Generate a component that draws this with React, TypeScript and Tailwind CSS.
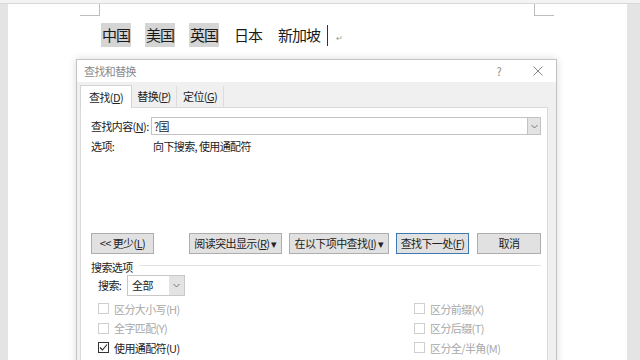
const WORDS = [
  { text: '中国', hl: true },
  { text: '美国', hl: true },
  { text: '英国', hl: true },
  { text: '日本', hl: false },
  { text: '新加坡', hl: false },
];

const LEFT_OPTS = [
  { label: '区分大小写(H)', checked: false },
  { label: '全字匹配(Y)', checked: false },
  { label: '使用通配符(U)', checked: true },
  { label: '', checked: false },
];

const RIGHT_OPTS = ['区分前缀(X)', '区分后缀(T)', '区分全/半角(M)', ''];

function Chevron() {
  return (
    <svg width="7" height="5" viewBox="0 0 7 5" className="text-[#777]">
      <path d="M0.5 1 L3.5 4 L6.5 1" fill="none" stroke="currentColor" strokeWidth="1" />
    </svg>
  );
}

function Check({ label, checked }: { label: string; checked: boolean }) {
  return (
    <div className="h-[19.5px] flex items-center gap-[5px]">
      <div
        className={`w-[11px] h-[11px] border bg-white flex items-center justify-center ${
          checked ? 'border-[#333]' : 'border-[#cfcfcf]'
        }`}
      >
        {checked && (
          <svg width="9" height="9" viewBox="0 0 9 9">
            <path d="M1 4.5 L3.5 7 L8 1.5" fill="none" stroke="#222" strokeWidth="1.1" />
          </svg>
        )}
      </div>
      {label && <span className={checked ? 'text-[#222]' : 'text-[#a8a8a8]'}>{label}</span>}
    </div>
  );
}

function Btn({ w, children, primary }: { w: string; children: React.ReactNode; primary?: boolean }) {
  return (
    <div
      className={`${w} h-[21px] flex items-center justify-center bg-[#e1e1e1] border ${
        primary ? 'border-[#3f79b4]' : 'border-[#adadad]'
      }`}
    >
      {children}
    </div>
  );
}

export default function App() {
  return (
    <div className="w-[640px] h-[360px] overflow-hidden bg-[#e4e4e4] relative font-['Noto_Sans_CJK_SC','Noto_Sans',sans-serif]">
      {/* ruler strip */}
      <div className="h-[4px] bg-[#f3f3f3] border-b border-[#d8d8d8]" />
      {/* document page */}
      <div className="ml-[8px] w-[619px] h-[356px] bg-white relative">
        <div className="absolute left-[72px] top-0 w-[20px] h-[12px] border-r border-b border-[#bdbdbd]" />
        <div className="absolute left-[526px] top-0 w-[20px] h-[12px] border-l border-b border-[#bdbdbd]" />
        <div className="pt-[16px] pl-[93px] flex items-center text-[15px] leading-[24px] text-[#1a1a1a] tracking-[-1px]">
          {WORDS.map((w, i) => (
            <span key={i} className={`${w.hl ? 'bg-[#d5d5d5]' : ''} px-[1px] mr-[14px]`}>
              {w.text}
            </span>
          ))}
          <span className="w-px h-[21px] bg-[#333] -ml-[8px]" />
          <span className="ml-[8px] text-[8px] text-[#999] mt-[6px]">↵</span>
        </div>
      </div>

      {/* find & replace dialog */}
      <div className="absolute left-[76px] top-[59px] w-[481px] h-[320px] bg-[#f0f0f0] border border-[#c4c4c4] shadow-[0_0_8px_rgba(0,0,0,0.15)] text-[11px] tracking-[-0.6px] text-[#222] flex flex-col">
        <div className="h-[24px] bg-white flex items-center pl-[7px] pr-[13px] text-[#8a8a8a]">
          <span>查找和替换</span>
          <span className="ml-auto mr-[32px] text-[11px] text-[#888]">?</span>
          <svg width="10" height="10" viewBox="0 0 10 10">
            <path d="M0.5 0.5 L9.5 9.5 M9.5 0.5 L0.5 9.5" stroke="#888" strokeWidth="1" />
          </svg>
        </div>
        <div className="flex items-end pl-[3px] mt-[3px] h-[22px]">
          <div className="w-[52px] h-[23px] bg-white border border-b-0 border-[#d4d4d4] flex items-center justify-center relative z-10 -mb-px">
            查找(<u>D</u>)
          </div>
          <div className="w-[45px] h-[21px] flex items-center justify-center border-r border-[#dcdcdc]">
            替换(<u>P</u>)
          </div>
          <div className="w-[47px] h-[21px] flex items-center justify-center border-r border-[#dcdcdc]">
            定位(<u>G</u>)
          </div>
        </div>
        <div className="ml-[3px] w-[468px] flex-1 bg-white border border-[#d9d9d9] pl-[10px] pr-[6px] flex flex-col">
          <div className="mt-[9px] h-[18px] flex items-center">
            <span className="w-[60px]">
              查找内容(<u>N</u>):
            </span>
            <div className="flex-1 h-[18px] border border-[#c3c3c3] flex items-center">
              <span className="pl-[2px]">?国</span>
              <div className="ml-auto w-[13px] h-full bg-[#e3e3e3] border-l border-[#c3c3c3] flex items-center justify-center">
                <Chevron />
              </div>
            </div>
          </div>
          <div className="mt-[4px] h-[14px] flex items-center">
            <span className="w-[62px]">选项:</span>
            <span>向下搜索, 使用通配符</span>
          </div>
          <div className="mt-[80px] h-[21px] flex items-center">
            <Btn w="w-[64px]">
              &lt;&lt; 更少(<u>L</u>)
            </Btn>
            <div className="ml-[35px]">
              <Btn w="w-[93px]">
                阅读突出显示(<u>R</u>) ▾
              </Btn>
            </div>
            <div className="ml-[7px]">
              <Btn w="w-[100px]">
                在以下项中查找(<u>I</u>) ▾
              </Btn>
            </div>
            <div className="ml-[7px]">
              <Btn w="w-[73px]" primary>
                查找下一处(<u>F</u>)
              </Btn>
            </div>
            <div className="ml-[8px]">
              <Btn w="w-[64px]">取消</Btn>
            </div>
          </div>
          <div className="mt-[6px] h-[14px] flex items-center">
            <span>搜索选项</span>
            <div className="flex-1 ml-[6px] h-px bg-[#e2e2e2] -mt-[4px]" />
          </div>
          <div className="mt-[1px] ml-[7px] h-[21px] flex items-center">
            <span className="w-[29px]">搜索:</span>
            <div className="w-[58px] h-[21px] border border-[#c8c8c8] flex items-center">
              <span className="pl-[4px]">全部</span>
              <div className="ml-auto w-[15px] h-full bg-[#e3e3e3] flex items-center justify-center">
                <Chevron />
              </div>
            </div>
          </div>
          <div className="mt-[3px] ml-[7px] flex">
            <div className="w-[316px] flex flex-col">
              {LEFT_OPTS.map((o, i) => (
                <Check key={i} label={o.label} checked={o.checked} />
              ))}
            </div>
            <div className="flex flex-col">
              {RIGHT_OPTS.map((l, i) => (
                <Check key={i} label={l} checked={false} />
              ))}
            </div>
          </div>
        </div>
      </div>
    </div>
  );
}
